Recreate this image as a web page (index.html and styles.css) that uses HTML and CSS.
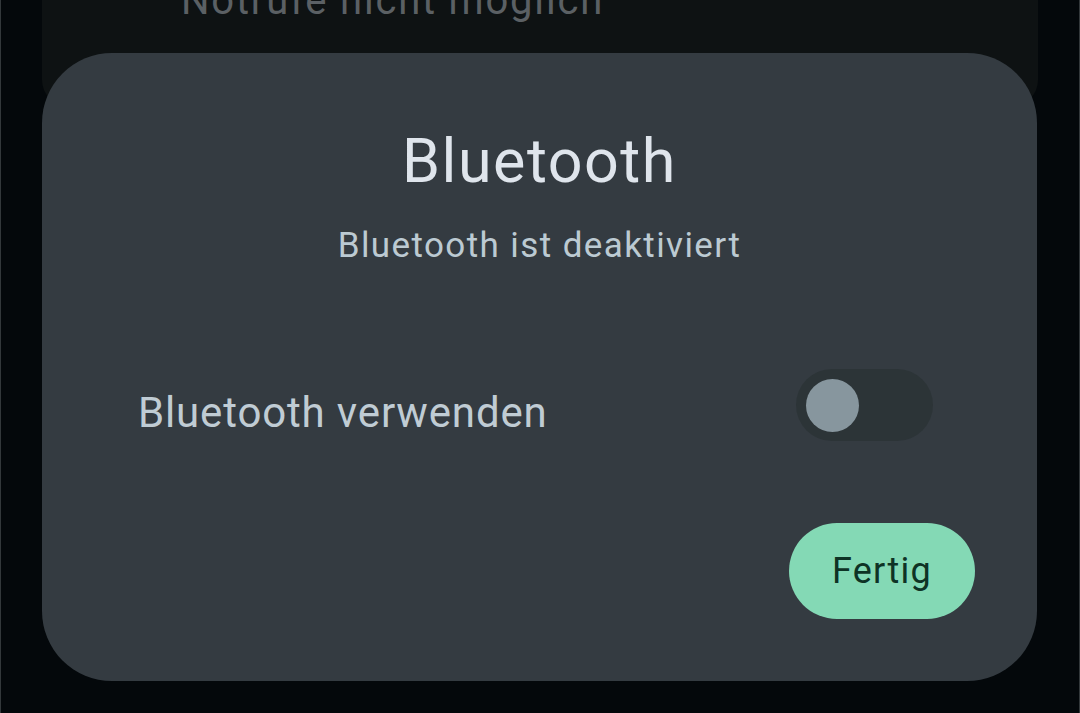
FILE: index.html
```html
<!DOCTYPE html>
<html lang="de">
<head>
<meta charset="UTF-8">
<meta name="viewport" content="width=device-width, initial-scale=1.0">
<title>Bluetooth</title>
<link rel="stylesheet" href="styles.css">
</head>
<body>

<div class="screen">
    <div class="backpanel">
        <p class="backtext">Notrufe nicht möglich</p>
    </div>

    <div class="dialog">
        <h2 class="title">Bluetooth</h2>
        <p class="subtitle">Bluetooth ist deaktiviert</p>

        <div class="row">
            <span class="row-label">Bluetooth verwenden</span>
            <div class="switch"><div class="thumb"></div></div>
        </div>

        <div class="actions">
            <button class="done-btn">Fertig</button>
        </div>
    </div>
</div>

</body>
</html>
```

FILE: styles.css
```css
body {
    margin: 0;
    background-color: #04080b;
    font-family: Roboto, "Noto Sans", sans-serif;
}
.screen {
    height: 713px;
    overflow: hidden;
    border-left: 1px solid #33383b;
    border-right: 1px solid #33383b;
}
.backpanel {
    height: 106px;
    margin: 0 41px;
    padding-left: 139px;
    background-color: #0e1213;
    border-radius: 0 0 26px 26px;
    overflow: hidden;
}
.backtext {
    margin: -23px 0 0 0;
    font-size: 40px;
    line-height: 48px;
    letter-spacing: 1.8px;
    color: #5b6064;
}
.dialog {
    margin: -53px 42px 0 41px;
    padding: 72px 62px 62px 96px;
    background-color: #343b41;
    border-radius: 70px;
    display: flex;
    flex-direction: column;
}
.title {
    margin: 0;
    text-align: center;
    font-size: 61px;
    line-height: 72px;
    font-weight: 400;
    letter-spacing: 1.5px;
    color: #dfe5ec;
    padding-right: 34px;
}
.subtitle {
    margin: 27px 0 0 0;
    text-align: center;
    font-size: 35px;
    line-height: 44px;
    letter-spacing: 1.4px;
    color: #bccad2;
    padding-right: 34px;
}
.row {
    margin-top: 101px;
    margin-right: 42px;
    display: flex;
    justify-content: space-between;
    align-items: flex-start;
}
.row-label {
    margin-top: 19px;
    font-size: 42px;
    line-height: 50px;
    letter-spacing: 0.85px;
    color: #c0ccd4;
}
.switch {
    width: 137px;
    height: 72px;
    border-radius: 36px;
    background-color: #2c3437;
    display: flex;
    align-items: center;
    padding-left: 10px;
    box-sizing: border-box;
}
.thumb {
    width: 53px;
    height: 53px;
    border-radius: 50%;
    background-color: #87969e;
}
.actions {
    margin-top: 82px;
    display: flex;
    justify-content: flex-end;
}
.done-btn {
    width: 186px;
    height: 96px;
    border: none;
    border-radius: 48px;
    background-color: #84d9b5;
    color: #0e3325;
    font-family: Roboto, "Noto Sans", sans-serif;
    font-size: 36px;
    letter-spacing: 1.3px;
    padding: 0;
}
```
